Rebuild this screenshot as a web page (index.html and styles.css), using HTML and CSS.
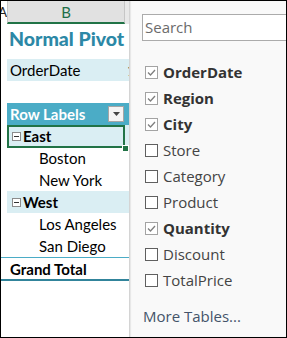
FILE: index.html
```html
<!DOCTYPE html>
<html lang="en">
<head>
    <meta charset="UTF-8">
    <title>Normal Pivot</title>
    <link rel="stylesheet" href="styles.css">
</head>
<body>
    <div class="frame">
        <div class="sheet">
            <div class="colheads">
                <div class="colhead stub">A</div>
                <div class="colhead active">B</div>
                <div class="colhead next"></div>
            </div>
            <div class="row title"><div class="gutter"></div><div class="cell">Normal Pivot</div></div>
            <div class="row"><div class="gutter"></div><div class="cell band">OrderDate<span class="peek">1</span></div></div>
            <div class="row"><div class="gutter"></div><div class="cell"></div></div>
            <div class="row"><div class="gutter"></div>
                <div class="cell head">Row Labels
                    <span class="dropdown"><svg width="7" height="4" viewBox="0 0 7 4"><path d="M0 0h7L3.5 4z" fill="#444"/></svg></span>
                </div>
            </div>
            <div class="row selected"><div class="gutter"></div>
                <div class="cell band group"><span class="toggle"></span>East</div>
                <div class="sel-box"></div>
                <div class="sel-handle"></div>
            </div>
            <div class="row"><div class="gutter"></div><div class="cell child">Boston</div></div>
            <div class="row"><div class="gutter"></div><div class="cell child">New York</div></div>
            <div class="row"><div class="gutter"></div><div class="cell band group"><span class="toggle"></span>West</div></div>
            <div class="row"><div class="gutter"></div><div class="cell child">Los Angeles</div></div>
            <div class="row"><div class="gutter"></div><div class="cell child">San Diego</div></div>
            <div class="row total"><div class="gutter"></div><div class="cell">Grand Total</div></div>
        </div>

        <div class="panel">
            <div class="search">Search</div>
            <ul class="fields">
                <li class="on"><span class="box"><svg width="11" height="11" viewBox="0 0 11 11"><path d="M2 5.5l2.5 2.5L9 3" fill="none" stroke="#7f7f7f" stroke-width="1.3"/></svg></span>OrderDate</li>
                <li class="on"><span class="box"><svg width="11" height="11" viewBox="0 0 11 11"><path d="M2 5.5l2.5 2.5L9 3" fill="none" stroke="#7f7f7f" stroke-width="1.3"/></svg></span>Region</li>
                <li class="on"><span class="box"><svg width="11" height="11" viewBox="0 0 11 11"><path d="M2 5.5l2.5 2.5L9 3" fill="none" stroke="#7f7f7f" stroke-width="1.3"/></svg></span>City</li>
                <li><span class="box"></span>Store</li>
                <li><span class="box"></span>Category</li>
                <li><span class="box"></span>Product</li>
                <li class="on"><span class="box"><svg width="11" height="11" viewBox="0 0 11 11"><path d="M2 5.5l2.5 2.5L9 3" fill="none" stroke="#7f7f7f" stroke-width="1.3"/></svg></span>Quantity</li>
                <li><span class="box"></span>Discount</li>
                <li><span class="box"></span>TotalPrice</li>
            </ul>
            <div class="more">More Tables...</div>
        </div>
    </div>
</body>
</html>
```

FILE: styles.css
```css
body { margin: 0; background: #fff; }
.frame { width: 287px; height: 338px; box-sizing: border-box; border: 1px solid #000; display: flex; overflow: hidden; }

/* sheet side */
.sheet { width: 128px; flex: none; border-right: 1px solid #d4d4d4; background: #fff; font-family: Lato, "Liberation Sans", sans-serif; font-size: 15px; color: #000; }
.colheads { display: flex; height: 23px; }
.colhead { box-sizing: border-box; height: 23px; display: flex; align-items: center; justify-content: center; font-size: 15px; }
.colhead.stub { width: 6px; justify-content: flex-end; overflow: hidden; color: #222; font-size: 13px; border-bottom: 2px solid transparent; }
.colhead.active { width: 118px; background: #e1e1e1; color: #1e6e48; border-left: 1px solid #c6c6c6; border-right: 1px solid #c6c6c6; border-bottom: 2px solid #217346; }
.colhead.next { flex: 1; background: #e8e8e8; border-bottom: 2px solid transparent; }

.row { display: flex; height: 22px; position: relative; }
.gutter { width: 6px; flex: none; }
.cell { flex: 1; display: flex; align-items: center; padding-left: 3px; overflow: hidden; white-space: nowrap; }
.row.title { height: 35px; }
.row.title .cell { align-items: flex-start; padding-top: 2px; color: #2c88a6; font-weight: 900; font-size: 19.5px; line-height: 26px; padding-left: 2px; }
.band { background: #daeef3; }
.peek { margin-left: auto; width: 2px; overflow: hidden; color: #333; }
.head { background: #4bacc6; color: #fff; font-weight: bold; }
.dropdown { margin-left: auto; margin-right: 5px; width: 16px; height: 16px; box-sizing: border-box; background: #f4f4f4; border: 1px solid #a5a5a5; display: flex; align-items: center; justify-content: center; }
.group { font-weight: bold; padding-left: 5px; }
.toggle { width: 9px; height: 9px; box-sizing: border-box; border: 1px solid #8c8c8c; background: #fff; margin-right: 2px; position: relative; }
.toggle::after { content: ""; position: absolute; left: 1px; right: 1px; top: 3px; height: 1px; background: #333; }
.child { padding-left: 32px; }
.sel-box { position: absolute; left: 6px; top: 0; width: 118px; height: 23px; box-sizing: border-box; border: 2px solid #217346; }
.sel-handle { position: absolute; left: 121px; top: 20px; width: 5px; height: 5px; background: #217346; border: 1px solid #fff; }
.row.total { height: 21px; border-top: 1px solid #4bacc6; border-bottom: 2px solid #31849b; }
.row.total .cell { font-weight: bold; }

/* field list */
.panel { flex: 1; background: #f9f9f9; box-shadow: inset 1px 0 1px #e6e6e6; font-family: "Open Sans", "Noto Sans", sans-serif; font-size: 15px; color: #444; }
.search { margin: 13px 0 0 12px; height: 27px; box-sizing: border-box; border: 1px solid #ababab; border-right: none; background: #fff; color: #6b6b6b; padding-left: 2px; line-height: 24px; }
.fields { list-style: none; margin: 18px 0 0 0; padding: 0 0 0 15px; }
.fields li { height: 26px; display: flex; align-items: center; white-space: nowrap; }
.fields li.on { font-weight: bold; color: #333; }
.box { width: 13px; height: 13px; box-sizing: border-box; border: 1px solid #5f5f5f; background: #fff; margin-right: 5px; display: flex; align-items: center; justify-content: center; flex: none; }
.on .box { border-color: #a3a3a3; }
.more { margin: 10px 0 0 13px; line-height: 26px; color: #44546a; }
```
